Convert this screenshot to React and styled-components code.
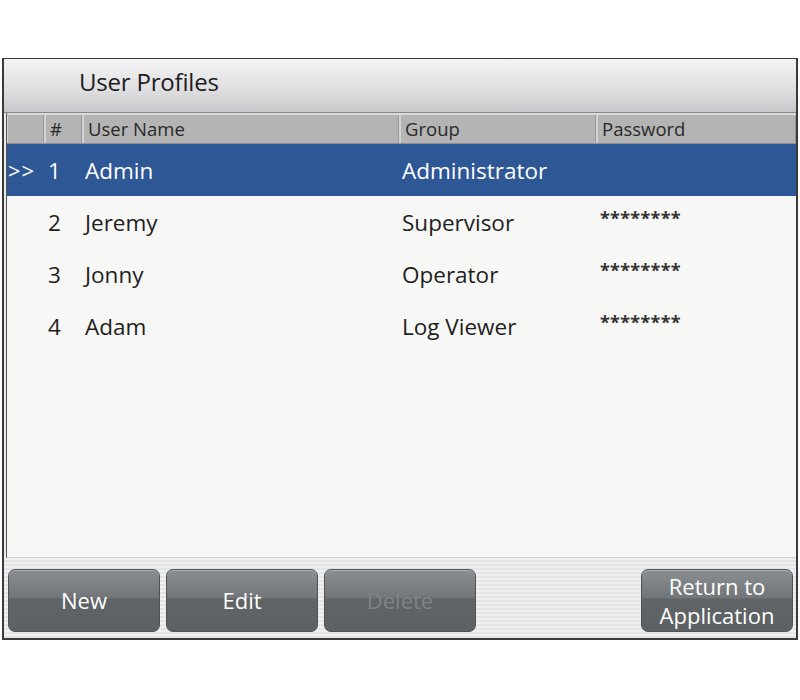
import React from "react";
import styled, { createGlobalStyle } from "styled-components";

const users = [
  { id: 1, name: "Admin", group: "Administrator", password: "", selected: true },
  { id: 2, name: "Jeremy", group: "Supervisor", password: "********" },
  { id: 3, name: "Jonny", group: "Operator", password: "********" },
  { id: 4, name: "Adam", group: "Log Viewer", password: "********" },
];

const App = () => {
  return (
    <>
      <GlobalStyle />
      <Page>
        <Frame>
          <TitleBar>User Profiles</TitleBar>
          <Table>
            <HeaderRow>
              <HeadCell />
              <HeadCell>#</HeadCell>
              <HeadCell>User Name</HeadCell>
              <HeadCell>Group</HeadCell>
              <HeadCell>Password</HeadCell>
            </HeaderRow>
            {users.map((u) => (
              <Row key={u.id} selected={u.selected}>
                <Marker>{u.selected ? ">>" : ""}</Marker>
                <Num>{u.id}</Num>
                <Cell>{u.name}</Cell>
                <Cell>{u.group}</Cell>
                <Pass>{u.password}</Pass>
              </Row>
            ))}
          </Table>
          <ButtonBar>
            <Button>New</Button>
            <Button>Edit</Button>
            <Button disabled>Delete</Button>
            <Spacer />
            <Button>
              Return to
              <br />
              Application
            </Button>
          </ButtonBar>
        </Frame>
      </Page>
    </>
  );
};

export default App;

// ----------------------------
// Styled Components
// ----------------------------
const GlobalStyle = createGlobalStyle`
  body {
    margin: 0;
    background: #ffffff;
    font-family: "Open Sans", "Liberation Sans", sans-serif;
  }
`;

const Page = styled.div`
  width: 800px;
  height: 700px;
  padding: 58px 2px 0 2px;
  box-sizing: border-box;
`;

const Frame = styled.div`
  width: 796px;
  height: 582px;
  box-sizing: border-box;
  border: 2px solid #3a3a3a;
  border-top-width: 1px;
  display: flex;
  flex-direction: column;
  background: #ebebeb;
`;

const TitleBar = styled.div`
  height: 54px;
  padding: 0 0 8px 75px;
  display: flex;
  align-items: center;
  font-size: 24px;
  color: #1c1c1c;
  letter-spacing: -0.2px;
  background: linear-gradient(#f3f3f4, #e2e2e4 50%, #c9c9cd);
  border-bottom: 1px solid #8a8a8e;
  box-sizing: border-box;
`;

const Table = styled.div`
  flex: 1;
  background: #f7f7f5;
  margin-left: 2px;
  border-left: 1px solid #555;
  border-bottom: 1px solid #d0d0d0;
  display: flex;
  flex-direction: column;
`;

const columns = "37px 38px 317px 197px 1fr";

const HeaderRow = styled.div`
  display: grid;
  grid-template-columns: ${columns};
  height: 28px;
  background: #b3b4b3;
  border-top: 2px solid #d9d9d9;
  border-bottom: 1px solid #8e8e8e;
  box-sizing: content-box;
`;

const HeadCell = styled.div`
  border-left: 2px solid #d4d4d4;
  border-right: 1px solid #999;
  padding-left: 4px;
  font-size: 18.5px;
  line-height: 28px;
  color: #2a2a2a;
  white-space: nowrap;

  &:first-child {
    border-left: 1px solid #d4d4d4;
  }
`;

const Row = styled.div`
  display: grid;
  grid-template-columns: ${columns};
  height: 52px;
  align-items: center;
  font-size: 22.5px;
  color: ${(p) => (p.selected ? "#ffffff" : "#1e1e1e")};
  background: ${(p) => (p.selected ? "#2e5796" : "transparent")};
`;

const Marker = styled.div`
  padding-left: 1px;
  font-size: 22px;
  letter-spacing: 1px;
`;

const Num = styled.div`
  padding-left: 4px;
`;

const Cell = styled.div`
  padding-left: 3px;
  white-space: nowrap;
`;

const Pass = styled.div`
  padding-left: 4px;
  font-size: 18px;
  font-weight: bold;
  color: #333;
  letter-spacing: 0.3px;
  position: relative;
  top: -4px;
`;

const ButtonBar = styled.div`
  height: 80px;
  box-sizing: border-box;
  padding: 11px 3px 5px 4px;
  display: flex;
  gap: 6px;
  background: repeating-linear-gradient(
    #f0f0f0 0px,
    #f0f0f0 2px,
    #e4e4e4 2px,
    #e4e4e4 4px
  );
`;

const Button = styled.div`
  width: 152px;
  height: 63px;
  box-sizing: border-box;
  border-radius: 7px;
  border: 1px solid #4f5355;
  background: linear-gradient(#8b8e91, #737679 45%, #606466 48%, #5d6163);
  box-shadow: inset 0 1px 0 rgba(255, 255, 255, 0.3);
  color: ${(p) => (p.disabled ? "#7f8385" : "#ffffff")};
  font-size: 22px;
  line-height: 29px;
  text-align: center;
  display: flex;
  align-items: center;
  justify-content: center;
`;

const Spacer = styled.div`
  flex: 1;
`;
